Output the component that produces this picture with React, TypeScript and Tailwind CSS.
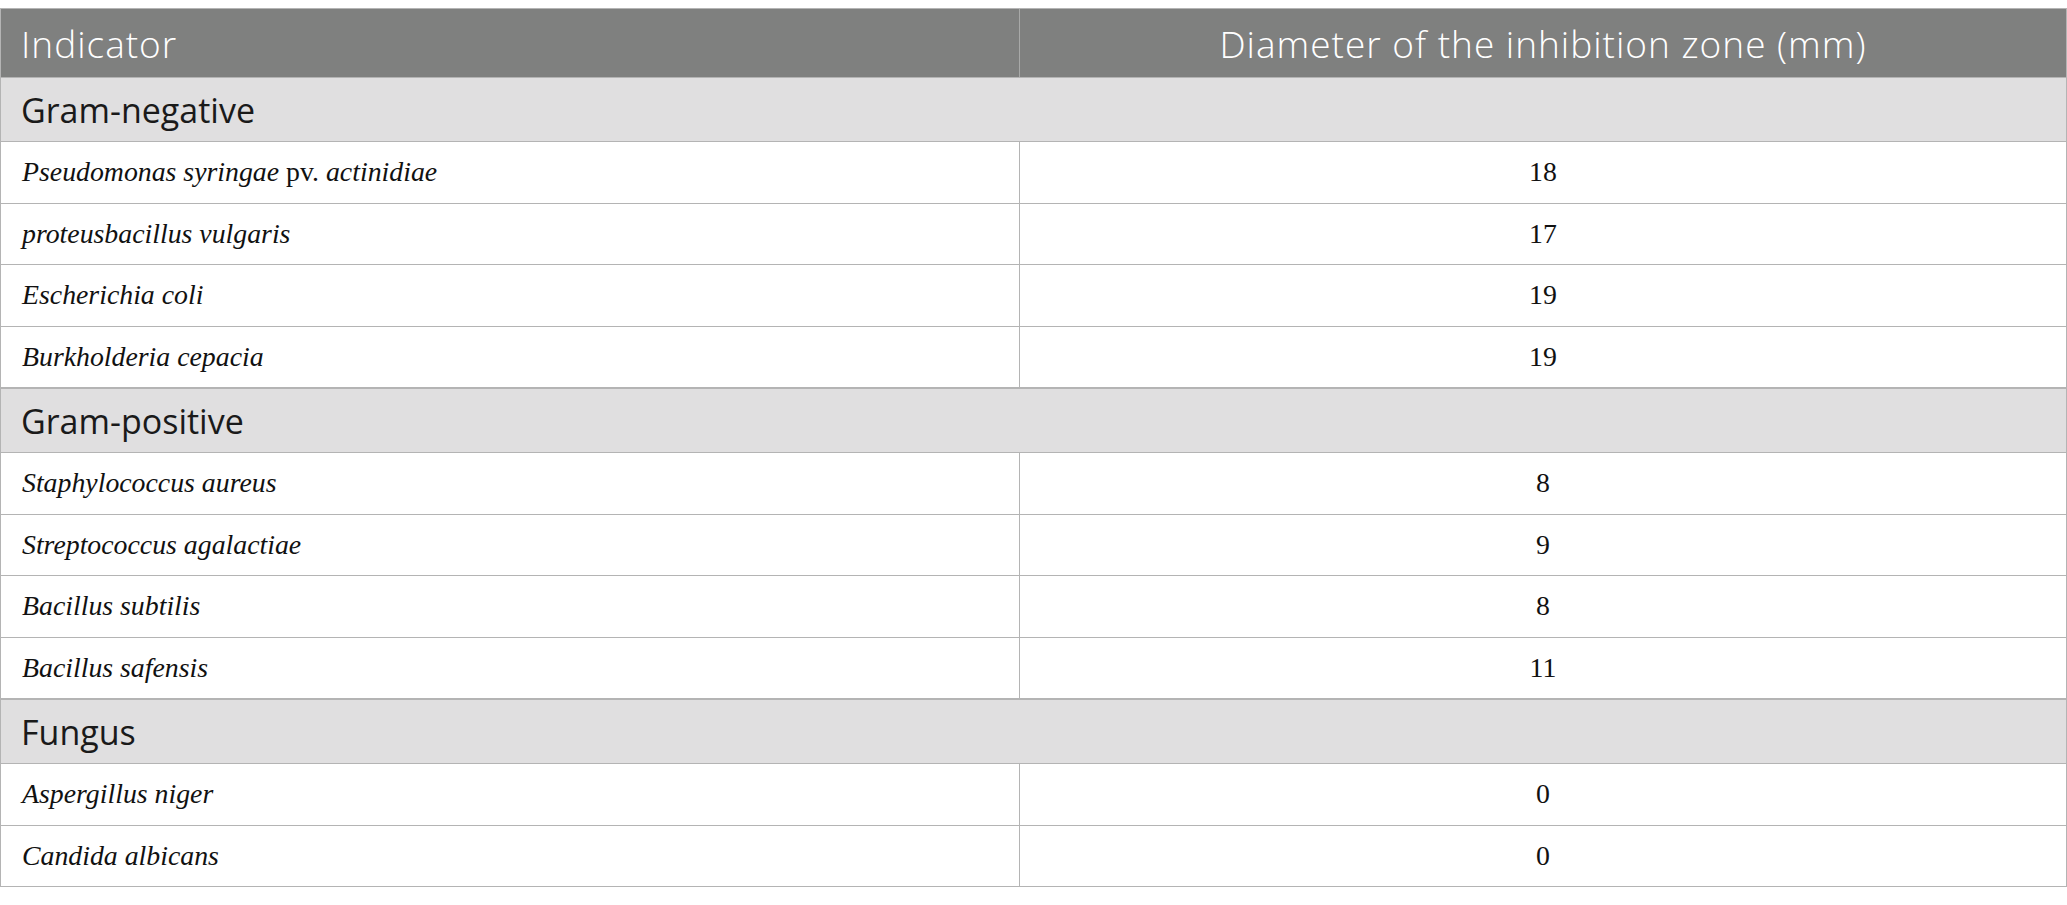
import React from "react";

type Row = { name: React.ReactNode; value: string };
type Group = { title: string; rows: Row[] };

const groups: Group[] = [
  {
    title: "Gram-negative",
    rows: [
      {
        name: (
          <>
            <i>Pseudomonas syringae</i> pv. <i>actinidiae</i>
          </>
        ),
        value: "18",
      },
      { name: <i>proteusbacillus vulgaris</i>, value: "17" },
      { name: <i>Escherichia coli</i>, value: "19" },
      { name: <i>Burkholderia cepacia</i>, value: "19" },
    ],
  },
  {
    title: "Gram-positive",
    rows: [
      { name: <i>Staphylococcus aureus</i>, value: "8" },
      { name: <i>Streptococcus agalactiae</i>, value: "9" },
      { name: <i>Bacillus subtilis</i>, value: "8" },
      { name: <i>Bacillus safensis</i>, value: "11" },
    ],
  },
  {
    title: "Fungus",
    rows: [
      { name: <i>Aspergillus niger</i>, value: "0" },
      { name: <i>Candida albicans</i>, value: "0" },
    ],
  },
];

const sans = "font-['Open_Sans','Lato',sans-serif]";
const serif = "font-['Liberation_Serif','Times_New_Roman',serif]";

export default function App() {
  return (
    <div className="min-h-screen bg-white pt-[8px]">
      <div className="w-[2067px] border-t border-l border-r border-[#b4b4b4]">
        {/* Header */}
        <div className={`flex h-[68px] bg-[#7f807f] text-white ${sans}`}>
          <div className="flex w-[1019px] items-center border-r border-[#a8a9a8] pl-[20px] text-[37px] font-light leading-none tracking-[1px]">
            Indicator
          </div>
          <div className="flex flex-1 items-center justify-center text-[37px] font-light leading-none tracking-[1px]">
            Diameter of the inhibition zone (mm)
          </div>
        </div>
        {groups.map((g) => (
          <div key={g.title}>
            <div
              className={`flex h-[65px] items-center border-t border-b border-[#b4b4b4] bg-[#e0dfe0] pl-[20px] text-[34px] leading-none text-[#1a1a1a] ${sans}`}
            >
              {g.title}
            </div>
            {g.rows.map((r, i) => (
              <div
                key={i}
                className={`flex h-[61.5px] border-b border-[#b4b4b4] text-[27.8px] leading-none text-[#111] ${serif}`}
              >
                <div className="flex w-[1019px] items-center border-r border-[#b4b4b4] pl-[21px]">
                  <span>{r.name}</span>
                </div>
                <div className="flex flex-1 items-center justify-center">{r.value}</div>
              </div>
            ))}
          </div>
        ))}
      </div>
    </div>
  );
}
